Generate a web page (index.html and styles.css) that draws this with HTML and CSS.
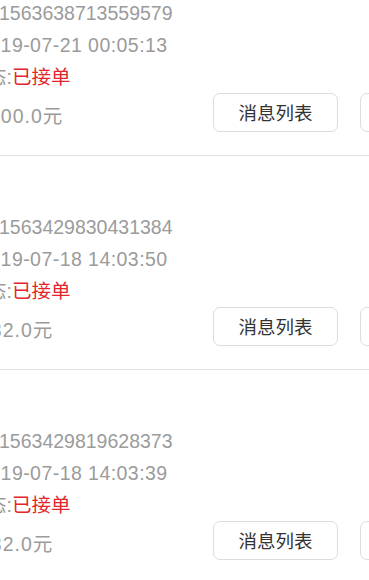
FILE: index.html
```html
<!DOCTYPE html>
<html lang="zh-CN">
<head>
<meta charset="utf-8">
<title>订单列表</title>
<link rel="stylesheet" href="styles.css">
</head>
<body>
<div class="list">
  <div class="order">
    <div class="line line-id"><span class="label">订单号:</span>1563638713559579</div>
    <div class="line line-time"><span class="label">下单时间:</span>2019-07-21 00:05:13</div>
    <div class="line line-status"><span class="label">订单状态:</span><span class="status">已接单</span></div>
    <div class="footer">
      <div class="price price-long"><span class="label">金额:</span>100.0元</div>
      <button class="btn">消息列表</button>
      <button class="btn">取消订单</button>
    </div>
  </div>
  <div class="order">
    <div class="line line-id"><span class="label">订单号:</span>1563429830431384</div>
    <div class="line line-time"><span class="label">下单时间:</span>2019-07-18 14:03:50</div>
    <div class="line line-status"><span class="label">订单状态:</span><span class="status">已接单</span></div>
    <div class="footer">
      <div class="price price-short"><span class="label">金额:</span>132.0元</div>
      <button class="btn">消息列表</button>
      <button class="btn">取消订单</button>
    </div>
  </div>
  <div class="order">
    <div class="line line-id"><span class="label">订单号:</span>1563429819628373</div>
    <div class="line line-time"><span class="label">下单时间:</span>2019-07-18 14:03:39</div>
    <div class="line line-status"><span class="label">订单状态:</span><span class="status">已接单</span></div>
    <div class="footer">
      <div class="price price-short"><span class="label">金额:</span>132.0元</div>
      <button class="btn">消息列表</button>
      <button class="btn">取消订单</button>
    </div>
  </div>
</div>
</body>
</html>
```
FILE: styles.css
```css
html, body {
  margin: 0;
  padding: 0;
  overflow: hidden;
  background: #ffffff;
}

body {
  font-family: "Liberation Sans", "Noto Sans CJK SC", sans-serif;
  color: #9b9b9b;
}

.list {
  margin-top: -58px;
}

.order {
  padding: 55px 0 23px;
  border-bottom: 1px solid #e3e3e3;
}

.line {
  height: 32px;
  line-height: 32px;
  font-size: 19.5px;
  white-space: nowrap;
}

.label {
  display: inline-block;
  width: 160px;
  margin-left: -160px;
  text-align: right;
  text-indent: 0;
  letter-spacing: 0;
}

.line-id {
  margin-left: -1px;
}

.line-time {
  margin-left: -22px;
  letter-spacing: 0.45px;
}

.line-status {
  margin-left: 12px;
}

.status {
  color: #e2262b;
}

.footer {
  display: grid;
  grid-template-columns: 191px 125px 125px;
  column-gap: 22px;
  align-items: start;
}

.price {
  font-size: 19.5px;
  line-height: 31px;
  padding-top: 8px;
  white-space: nowrap;
  letter-spacing: 1px;
}

.price-long {
  margin-left: -11px;
}

.price-short {
  margin-left: -21px;
}

.btn {
  height: 39px;
  width: 125px;
  padding: 0;
  margin: 0;
  border: 1px solid #dddddd;
  border-radius: 7px;
  background: #ffffff;
  color: #333333;
  font-family: "Noto Sans CJK SC", sans-serif;
  font-size: 18.5px;
  line-height: 37px;
}
```
